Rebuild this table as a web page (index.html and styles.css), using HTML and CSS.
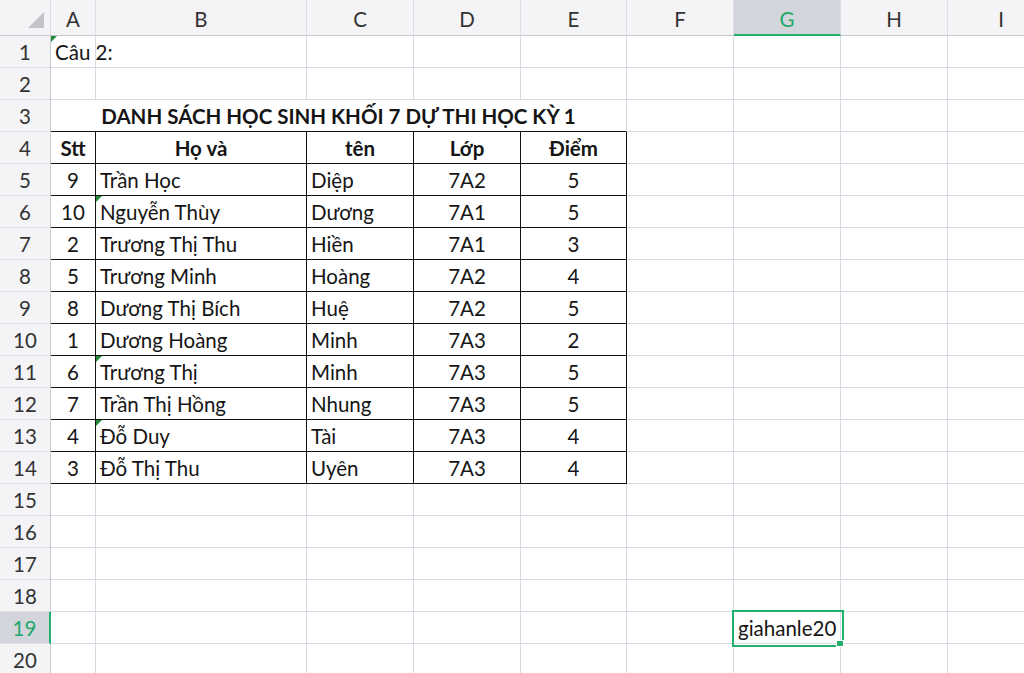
FILE: index.html
```html
<!DOCTYPE html>
<html lang="vi">
<head>
<meta charset="utf-8">
<title>Sheet</title>
<link rel="stylesheet" href="styles.css">
</head>
<body>
<table class="sheet">
<colgroup>
<col class="c-hd"><col class="c-a"><col class="c-b"><col class="c-std"><col class="c-std"><col class="c-e"><col class="c-std"><col class="c-std"><col class="c-std"><col class="c-std">
</colgroup>
<tr class="colhead">
<th class="corner"><svg width="51" height="36" viewBox="0 0 51 36"><polygon points="44,12 44,28 28,28" fill="#c4c4c8"/></svg></th>
<th>A</th><th>B</th><th>C</th><th>D</th><th>E</th><th>F</th><th class="sel-col">G</th><th>H</th><th>I</th>
</tr>
<tr><th class="rh">1</th><td class="mark"><span class="ovf">Câu 2:</span></td><td></td><td></td><td></td><td></td><td></td><td></td><td></td><td></td></tr>
<tr><th class="rh">2</th><td></td><td></td><td></td><td></td><td></td><td></td><td></td><td></td><td></td></tr>
<tr><th class="rh">3</th><td colspan="5" class="title bb">DANH SÁCH HỌC SINH KHỐI 7 DỰ THI HỌC KỲ 1</td><td></td><td></td><td></td><td></td></tr>
<tr class="tr"><th class="rh">4</th><td class="ctr b">Stt</td><td class="ctr b">Họ và</td><td class="ctr b">tên</td><td class="ctr b">Lớp</td><td class="ctr b">Điểm</td><td></td><td></td><td></td><td></td></tr>
<tr class="tr"><th class="rh">5</th><td class="ctr">9</td><td>Trần Học</td><td>Diệp</td><td class="ctr">7A2</td><td class="ctr">5</td><td></td><td></td><td></td><td></td></tr>
<tr class="tr"><th class="rh">6</th><td class="ctr">10</td><td class="mark">Nguyễn Thùy</td><td>Dương</td><td class="ctr">7A1</td><td class="ctr">5</td><td></td><td></td><td></td><td></td></tr>
<tr class="tr"><th class="rh">7</th><td class="ctr">2</td><td>Trương Thị Thu</td><td>Hiền</td><td class="ctr">7A1</td><td class="ctr">3</td><td></td><td></td><td></td><td></td></tr>
<tr class="tr"><th class="rh">8</th><td class="ctr">5</td><td>Trương Minh</td><td>Hoàng</td><td class="ctr">7A2</td><td class="ctr">4</td><td></td><td></td><td></td><td></td></tr>
<tr class="tr"><th class="rh">9</th><td class="ctr">8</td><td>Dương Thị Bích</td><td>Huệ</td><td class="ctr">7A2</td><td class="ctr">5</td><td></td><td></td><td></td><td></td></tr>
<tr class="tr"><th class="rh">10</th><td class="ctr">1</td><td>Dương Hoàng</td><td>Minh</td><td class="ctr">7A3</td><td class="ctr">2</td><td></td><td></td><td></td><td></td></tr>
<tr class="tr"><th class="rh">11</th><td class="ctr">6</td><td class="mark">Trương Thị</td><td>Minh</td><td class="ctr">7A3</td><td class="ctr">5</td><td></td><td></td><td></td><td></td></tr>
<tr class="tr"><th class="rh">12</th><td class="ctr">7</td><td>Trần Thị Hồng</td><td>Nhung</td><td class="ctr">7A3</td><td class="ctr">5</td><td></td><td></td><td></td><td></td></tr>
<tr class="tr"><th class="rh">13</th><td class="ctr">4</td><td class="mark">Đỗ Duy</td><td>Tài</td><td class="ctr">7A3</td><td class="ctr">4</td><td></td><td></td><td></td><td></td></tr>
<tr class="tr"><th class="rh">14</th><td class="ctr">3</td><td>Đỗ Thị Thu</td><td>Uyên</td><td class="ctr">7A3</td><td class="ctr">4</td><td></td><td></td><td></td><td></td></tr>
<tr><th class="rh">15</th><td></td><td></td><td></td><td></td><td></td><td></td><td></td><td></td><td></td></tr>
<tr><th class="rh">16</th><td></td><td></td><td></td><td></td><td></td><td></td><td></td><td></td><td></td></tr>
<tr><th class="rh">17</th><td></td><td></td><td></td><td></td><td></td><td></td><td></td><td></td><td></td></tr>
<tr><th class="rh">18</th><td></td><td></td><td></td><td></td><td></td><td></td><td></td><td></td><td></td></tr>
<tr><th class="rh sel-row">19</th><td></td><td></td><td></td><td></td><td></td><td></td><td class="active"><span class="ovf">giahanle20</span></td><td></td><td></td></tr>
<tr><th class="rh">20</th><td></td><td></td><td></td><td></td><td></td><td></td><td></td><td></td><td></td></tr>
</table>
</body>
</html>
```
FILE: styles.css
```css
html, body {
  margin: 0;
  padding: 0;
  background: #ffffff;
  overflow: hidden;
  width: 1024px;
  height: 673px;
}

.sheet {
  border-collapse: separate;
  border-spacing: 0;
  table-layout: fixed;
  width: 1055px;
  font-family: Lato, "Open Sans", sans-serif;
  font-size: 20.5px;
  color: #151515;
}

.c-hd { width: 51px; }
.c-a { width: 45px; }
.c-b { width: 211px; }
.c-std { width: 107px; }
.c-e { width: 106px; }

.sheet td, .sheet th {
  box-sizing: border-box;
  height: 32px;
  padding: 0 0 0 4px;
  border-right: 1px solid #d9d9e3;
  border-bottom: 1px solid #d9d9e3;
  white-space: nowrap;
  overflow: visible;
  vertical-align: middle;
  text-align: left;
  font-weight: normal;
  line-height: 22px;
}

.colhead th {
  height: 36px;
  background: #f4f4f6;
  color: #333;
  text-align: center;
  padding: 0;
  border-bottom: 1px solid #c8c8d0;
  border-right: 1px solid #dedee4;
  padding-top: 2px;
}

.colhead .corner {
  padding: 0;
  position: relative;
}
.corner svg {
  display: block;
  position: absolute;
  left: 0;
  top: 0;
}

.colhead .sel-col {
  background: #d3d5dc;
  color: #21a86a;
  border-bottom: 2px solid #21b06c;
  padding-top: 3px;
}

.sheet .rh {
  background: #f4f4f6;
  color: #333;
  text-align: center;
  padding: 0;
  border-right: 1px solid #c8c8d0;
  border-bottom: 1px solid #dedee4;
}

.sheet .sel-row {
  background: #d3d5dc;
  color: #21a86a;
  border-right: 2px solid #21b06c;
}

.sheet .title {
  text-align: center;
  font-weight: bold;
  padding: 0;
}

.sheet .bb {
  border-bottom: 1px solid #111;
}

.tr td:nth-child(-n+6) {
  border-right: 1px solid #111;
  border-bottom: 1px solid #111;
}

.sheet .ctr {
  text-align: center;
  padding: 0;
}

.sheet .b {
  font-weight: bold;
}

.mark {
  position: relative;
}
.mark::before {
  content: "";
  position: absolute;
  left: 0;
  top: 0;
  width: 0;
  height: 0;
  border-top: 6px solid #1f8a3a;
  border-right: 6px solid transparent;
}

.sheet .active {
  position: relative;
}
.active::after {
  content: "";
  position: absolute;
  left: -2px;
  top: -2px;
  width: 108px;
  height: 33px;
  border: 2px solid #21b06c;
  pointer-events: none;
}
.active::before {
  content: "";
  position: absolute;
  right: -4px;
  bottom: -4px;
  width: 6px;
  height: 5px;
  background: #21b06c;
  border: 1px solid #fff;
  z-index: 2;
}

.ovf {
  position: relative;
}
```
